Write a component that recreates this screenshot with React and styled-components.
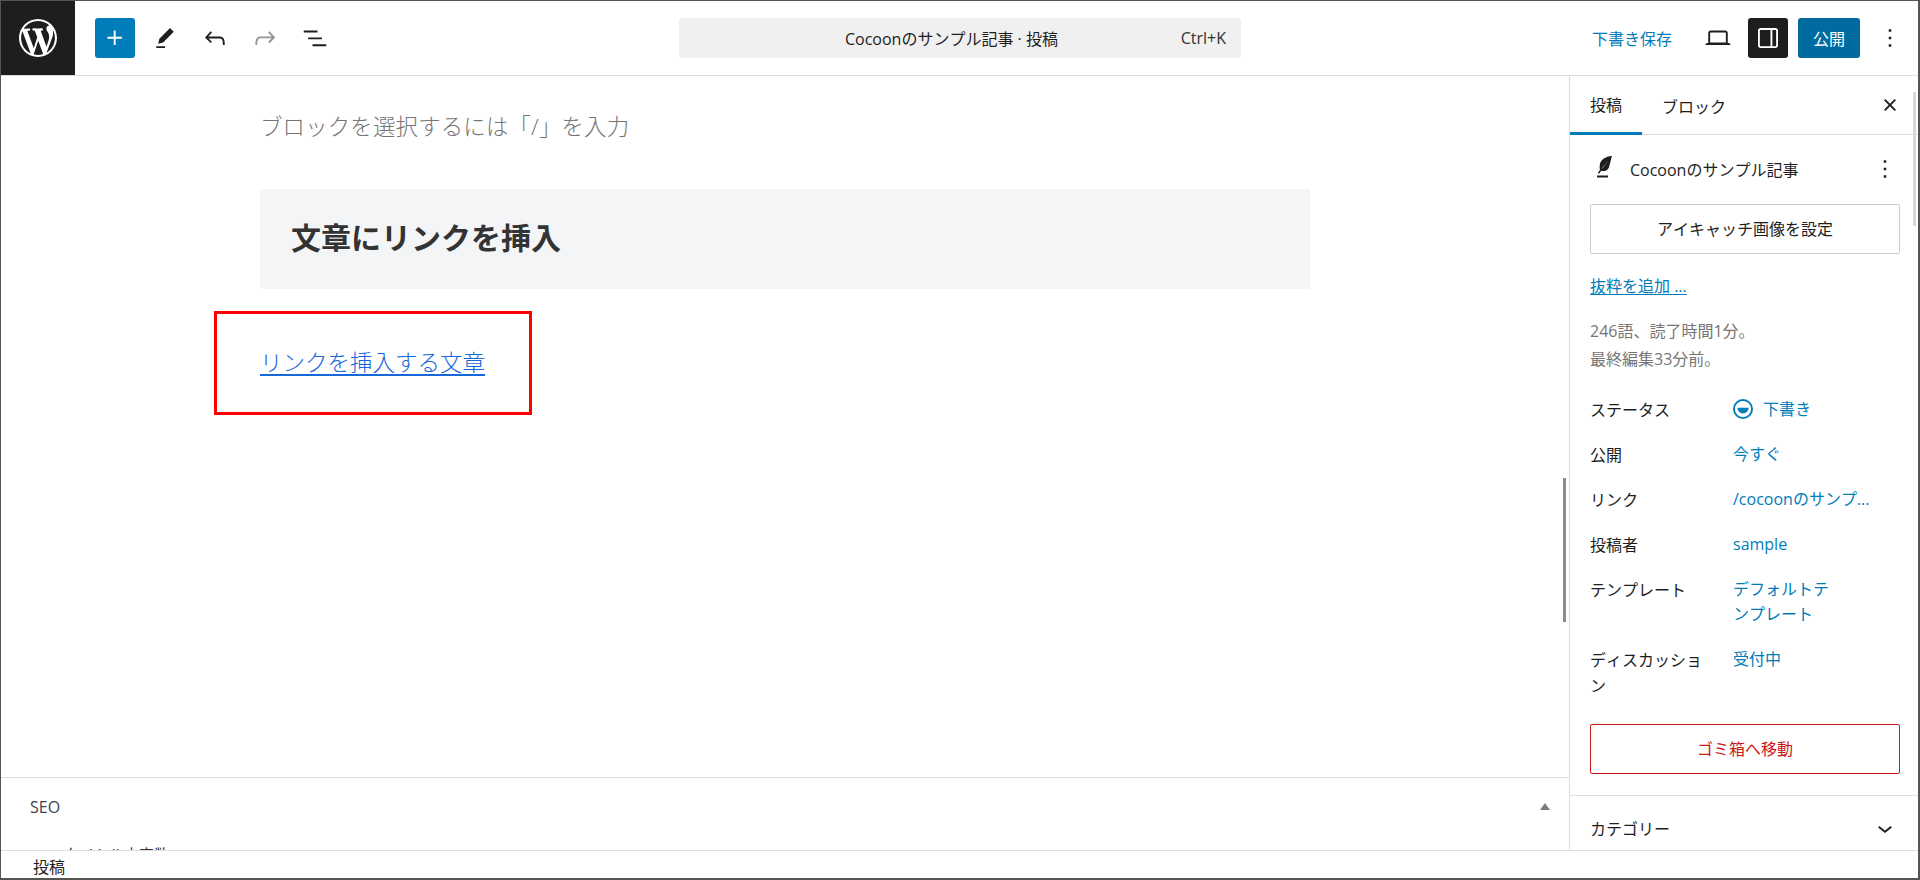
import React from "react"
import styled, { createGlobalStyle } from "styled-components"

const GlobalStyle = createGlobalStyle`
  html, body {
    margin: 0;
    padding: 0;
    background: #fff;
  }
  * {
    box-sizing: border-box;
  }
`

const Frame = styled.div`
  width: 1920px;
  height: 880px;
  display: flex;
  flex-direction: column;
  overflow: hidden;
  border: solid #555;
  border-width: 1px 2px 2px 1px;
  font-family: "Open Sans", "Noto Sans CJK JP", sans-serif;
  font-size: 16px;
  font-weight: 400;
  font-kerning: none;
  color: #1e1e1e;
  text-spacing-trim: space-all;
`

const Header = styled.header`
  height: 75px;
  flex: none;
  display: flex;
  align-items: center;
  border-bottom: 1px solid #ddd;
`

const LogoBox = styled.div`
  width: 74px;
  height: 74px;
  flex: none;
  background: #1e1e1e;
  color: #fff;
  display: flex;
  align-items: center;
  justify-content: center;
`

const Tools = styled.div`
  display: flex;
  align-items: center;
  gap: 10px;
  margin-left: 20px;
  width: 584px;
  flex: none;
`

const IconButton = styled.button`
  width: 40px;
  height: 40px;
  flex: none;
  padding: 0;
  border: 0;
  border-radius: 3px;
  display: flex;
  align-items: center;
  justify-content: center;
  background: ${p => p.$bg || "transparent"};
  color: ${p => p.$color || "#1e1e1e"};
`

const Icon = styled.svg`
  width: ${p => p.$size || 30}px;
  height: ${p => p.$size || 30}px;
  fill: currentColor;
  fill-rule: evenodd;
  display: block;
  flex: none;
`

const CommandBar = styled.div`
  width: 562px;
  height: 40px;
  flex: none;
  background: #f0f0f0;
  border-radius: 4px;
  display: flex;
  align-items: center;
  padding: 0 15px 0 166px;
`

const CommandTitle = styled.span`
  flex: 1;
`

const CommandKey = styled.span`
  color: #333;
`

const Actions = styled.div`
  display: flex;
  align-items: center;
  margin-left: auto;
  margin-right: 8px;
  gap: 10px;
`

const SaveLink = styled.span`
  color: #007cba;
  margin-right: 16px;
`

const PublishButton = styled.span`
  width: 62px;
  height: 40px;
  background: #006ba1;
  color: #fff;
  border-radius: 3px;
  display: flex;
  align-items: center;
  justify-content: center;
`

const Main = styled.div`
  flex: 1;
  min-height: 0;
  display: flex;
`

const EditorColumn = styled.div`
  width: 1568px;
  flex: none;
  display: flex;
  flex-direction: column;
  position: relative;
`

const Canvas = styled.div`
  flex: 1;
  min-height: 0;
  padding: 33px 0 0 259px;
  position: relative;
`

const Placeholder = styled.div`
  font-size: 22.4px;
  line-height: 36px;
  font-weight: 300;
  letter-spacing: 0.2px;
  color: #757575;
`

const HeadingBlock = styled.h2`
  width: 1050px;
  height: 100px;
  margin: 44px 0 0;
  padding: 0 31px 6px;
  background: #f4f5f7;
  display: flex;
  align-items: center;
  font-size: 30px;
  font-weight: 700;
  color: #333;
  border-radius: 2px;
`

const LinkedText = styled.a`
  display: inline-block;
  margin-top: 56px;
  font-size: 22.5px;
  line-height: 36px;
  font-weight: 300;
  color: #1768d8;
  text-decoration: underline;
  text-underline-offset: 3px;
`

const Callout = styled.div`
  position: absolute;
  left: 213px;
  top: 235px;
  width: 318px;
  height: 104px;
  border: 3px solid #f00;
`

const MetaBox = styled.section`
  height: 73px;
  flex: none;
  overflow: hidden;
  border-top: 1px solid #ddd;
  padding: 0 19px 0 29px;
`

const MetaHead = styled.div`
  height: 57px;
  display: flex;
  align-items: center;
  justify-content: space-between;
  color: #3c434a;
`

const MetaArrow = styled.span`
  width: 0;
  height: 0;
  border: 5px solid transparent;
  border-top: 0;
  border-bottom: 7px solid #787c82;
`

const MetaText = styled.div`
  margin-top: 8px;
  padding-left: 34px;
  font-size: 15px;
  color: #333;
`

const EditorThumb = styled.div`
  position: absolute;
  right: 3px;
  top: 402px;
  width: 3px;
  height: 144px;
  background: #8d8d8d;
`

const Sidebar = styled.aside`
  flex: 1;
  min-width: 0;
  border-left: 1px solid #ddd;
  position: relative;
  overflow: hidden;
`

const SidebarThumb = styled.div`
  position: absolute;
  right: 2px;
  top: 16px;
  width: 3px;
  height: 134px;
  background: #d8d8d8;
`

const TabBar = styled.div`
  height: 59px;
  display: flex;
  align-items: stretch;
  border-bottom: 1px solid #ddd;
  padding-right: 13px;
`

const Tab = styled.div`
  display: flex;
  align-items: center;
  padding: 0 20px;
  margin-bottom: -1px;
  border-bottom: ${p => p.$active ? "3px solid #007cba" : "0"};
`

const TabClose = styled.div`
  margin-left: auto;
  display: flex;
  align-items: center;
`

const Panel = styled.div`
  padding: 0 20px;
`

const TitleRow = styled.div`
  height: 69px;
  padding-bottom: 2px;
  display: flex;
  align-items: center;
  margin: 0 -2px 0 -1px;
  gap: 11px;
`

const TitleText = styled.span`
  flex: 1;
`

const OutlineButton = styled.div`
  height: 50px;
  width: 310px;
  padding-bottom: 2px;
  display: flex;
  align-items: center;
  justify-content: center;
  border-radius: 2px;
  border: 1px solid ${p => p.$danger ? "#cc1818" : "#ccc"};
  color: ${p => p.$danger ? "#cc1818" : "#1e1e1e"};
`

const ExcerptLink = styled.a`
  display: block;
  margin-top: 20px;
  line-height: 24px;
  color: #007cba;
  text-decoration: underline;
  text-underline-offset: 2px;
`

const InfoText = styled.p`
  margin: 19px 0 0;
  line-height: 28px;
  color: #757575;
`

const Rows = styled.div`
  margin-top: 24px;
`

const Row = styled.div`
  display: flex;
  align-items: flex-start;
  margin-bottom: ${p => p.$gap}px;
`

const RowLabel = styled.div`
  width: 143px;
  flex: none;
  line-height: 26px;
`

const RowValue = styled.div`
  display: flex;
  align-items: center;
  gap: 5px;
  max-width: 104px;
  line-height: 25px;
  color: #007cba;
  ${p => p.$nowrap && "max-width: 140px; white-space: nowrap;"}

  svg {
    margin: -3px 0 -2px -5px;
  }
`

const Collapsed = styled.div`
  margin-top: 21px;
  height: 54px;
  border-top: 1px solid #ddd;
  padding: 10px 18px 0 20px;
  display: flex;
  align-items: center;
  justify-content: space-between;
`

const StatusBar = styled.footer`
  height: 28px;
  flex: none;
  border-top: 1px solid #ddd;
  padding: 2px 0 0 32px;
  display: flex;
  align-items: center;
  background: #fff;
`

const G = ({ d, size, viewBox = "0 0 24 24" }) => (
  <Icon $size={size} viewBox={viewBox}><path d={d} /></Icon>
)

const WP_LOGO = "M20 10c0-5.51-4.49-10-10-10C4.48 0 0 4.49 0 10c0 5.52 4.48 10 10 10 5.51 0 10-4.48 10-10zM7.78 15.37L4.37 6.22c.55-.02 1.17-.08 1.17-.08.5-.06.44-1.13-.06-1.11 0 0-1.45.11-2.37.11-.18 0-.37 0-.58-.01C4.12 2.69 6.87 1.11 10 1.11c2.33 0 4.45.87 6.05 2.34-.68-.11-1.65.39-1.65 1.58 0 .74.45 1.36.9 2.1.35.61.55 1.36.55 2.46 0 1.49-1.4 5-1.4 5l-3.03-8.37c.54-.02.82-.17.82-.17.5-.05.44-1.25-.06-1.22 0 0-1.44.12-2.38.12-.87 0-2.33-.12-2.33-.12-.5-.03-.56 1.2-.06 1.22l.92.08 1.26 3.41zM17.41 10c.24-.64.74-1.87.43-4.25.7 1.29 1.05 2.71 1.05 4.25 0 3.29-1.73 6.24-4.4 7.78.97-2.59 1.94-5.2 2.92-7.78zM6.1 18.09C3.12 16.65 1.11 13.53 1.11 10c0-1.3.23-2.48.72-3.59C3.25 10.3 4.67 14.2 6.1 18.09zm4.03-6.63l2.58 6.98c-.86.29-1.76.45-2.71.45-.79 0-1.57-.11-2.29-.33.81-2.38 1.62-4.74 2.42-7.1z"
const PLUS = "M11 12.5V17.5H12.5V12.5H17.5V11H12.5V6H11V11H6V12.5H11Z"
const PEN = "m19 7-3-3-8.5 8.5-1 4 4-1L19 7Zm-7 11.5H5V20h7v-1.5Z"
const UNDO = "M18.3 11.7c-.6-.6-1.4-.9-2.3-.9H6.7l2.9-3.3-1.1-1-4.5 5L8.5 16l1-1-2.7-2.7H16c.5 0 .9.2 1.3.5 1 1 1 3.4 1 4.5v.3h1.5v-.2c0-1.5 0-4.3-1.5-5.7z"
const REDO = "M15.6 6.5l-1.1 1 2.9 3.3H8c-.9 0-1.7.3-2.3.9-1.4 1.5-1.4 4.2-1.4 5.6v.2h1.5v-.3c0-1.1 0-3.5 1-4.5.3-.3.7-.5 1.3-.5h9.2L14.5 15l1.1 1.1 4.6-4.6-4.6-5z"
const LIST = "M3 6h11v1.5H3V6Zm3.5 5.5h11V13h-11v-1.5ZM21 17H10v1.5h11V17Z"
const LAPTOP = "M20.5 16h-.7V8c0-1.1-.9-2-2-2H6.2c-1.1 0-2 .9-2 2v8h-.7c-.8 0-1.5.7-1.5 1.5h20c0-.8-.7-1.5-1.5-1.5zM5.7 8c0-.3.2-.5.5-.5h11.6c.3 0 .5.2.5.5v7.6H5.7V8z"
const SIDEBAR = "M18 4H6c-1.1 0-2 .9-2 2v12c0 1.1.9 2 2 2h12c1.1 0 2-.9 2-2V6c0-1.1-.9-2-2-2zm-4 14.5H6c-.3 0-.5-.2-.5-.5V6c0-.3.2-.5.5-.5h8v13zm4.5-.5c0 .3-.2.5-.5.5h-2.5v-13H18c.3 0 .5.2.5.5v12z"
const KEBAB = "M13 19h-2v-2h2v2zm0-6h-2v-2h2v2zm0-6h-2V5h2v2z"
const CLOSE = "M12 13.06l3.712 3.713 1.061-1.06L13.061 12l3.712-3.712-1.06-1.06L12 10.938 8.288 7.227l-1.061 1.06L10.939 12l-3.712 3.712 1.06 1.061L12 13.061z"
const CHEVRON = "M17.5 11.6L12 16l-5.5-4.4.9-1.2L12 14l4.5-3.6 1 1.2z"
const QUILL = "M18.4 1.6C13 2 9 4.5 8.6 9c-.2 2 0 3 .2 3.6L7 15.2l1 .6 1.8-2.4c2.2.6 5.2 0 6.2-2.9 1-3 1.4-6 2.4-8.9ZM10.2 12.2 15.5 5.2 11 10.6l-.8 1.6ZM6.4 17.2h8.8v1.6H6.4v-1.6Z"
const DRAFT = "M12 4a8 8 0 1 0 0 16 8 8 0 0 0 0-16Zm0 14.5a6.5 6.5 0 1 1 0-13 6.5 6.5 0 0 1 0 13ZM7.5 11h9a4.5 4.5 0 0 1-9 0Z"

export default function App() {
  return (
    <Frame>
      <GlobalStyle />
      <Header>
        <LogoBox><G d={WP_LOGO} size={38} viewBox="0 0 20 20" /></LogoBox>
        <Tools>
          <IconButton $bg="#007cba" $color="#fff"><G d={PLUS} /></IconButton>
          <IconButton><G d={PEN} /></IconButton>
          <IconButton><G d={UNDO} /></IconButton>
          <IconButton $color="#949494"><G d={REDO} /></IconButton>
          <IconButton><G d={LIST} /></IconButton>
        </Tools>
        <CommandBar>
          <CommandTitle>Cocoonのサンプル記事 · 投稿</CommandTitle>
          <CommandKey>Ctrl+K</CommandKey>
        </CommandBar>
        <Actions>
          <SaveLink>下書き保存</SaveLink>
          <IconButton><G d={LAPTOP} /></IconButton>
          <IconButton $bg="#1e1e1e" $color="#fff"><G d={SIDEBAR} /></IconButton>
          <PublishButton>公開</PublishButton>
          <IconButton><G d={KEBAB} /></IconButton>
        </Actions>
      </Header>
      <Main>
        <EditorColumn>
          <Canvas>
            <Placeholder>ブロックを選択するには「/」を入力</Placeholder>
            <HeadingBlock>文章にリンクを挿入</HeadingBlock>
            <LinkedText href="#">リンクを挿入する文章</LinkedText>
            <Callout />
          </Canvas>
          <MetaBox>
            <MetaHead>SEO<MetaArrow /></MetaHead>
            <MetaText>タイトル文字数</MetaText>
          </MetaBox>
          <EditorThumb />
        </EditorColumn>
        <Sidebar>
          <TabBar>
            <Tab $active>投稿</Tab>
            <Tab>ブロック</Tab>
            <TabClose><G d={CLOSE} /></TabClose>
          </TabBar>
          <Panel>
            <TitleRow>
              <G d={QUILL} />
              <TitleText>Cocoonのサンプル記事</TitleText>
              <G d={KEBAB} />
            </TitleRow>
            <OutlineButton>アイキャッチ画像を設定</OutlineButton>
            <ExcerptLink href="#">抜粋を追加 ...</ExcerptLink>
            <InfoText>246語、読了時間1分。<br />最終編集33分前。</InfoText>
            <Rows>
              <Row $gap={19}><RowLabel>ステータス</RowLabel><RowValue><G d={DRAFT} />下書き</RowValue></Row>
              <Row $gap={19}><RowLabel>公開</RowLabel><RowValue>今すぐ</RowValue></Row>
              <Row $gap={19}><RowLabel>リンク</RowLabel><RowValue $nowrap>/cocoonのサンプ...</RowValue></Row>
              <Row $gap={19}><RowLabel>投稿者</RowLabel><RowValue>sample</RowValue></Row>
              <Row $gap={20}><RowLabel>テンプレート</RowLabel><RowValue>デフォルトテンプレート</RowValue></Row>
              <Row $gap={25}><RowLabel>ディスカッショ<br />ン</RowLabel><RowValue>受付中</RowValue></Row>
            </Rows>
            <OutlineButton $danger>ゴミ箱へ移動</OutlineButton>
          </Panel>
          <Collapsed>カテゴリー<G d={CHEVRON} /></Collapsed>
          <SidebarThumb />
        </Sidebar>
      </Main>
      <StatusBar>投稿</StatusBar>
    </Frame>
  )
}
